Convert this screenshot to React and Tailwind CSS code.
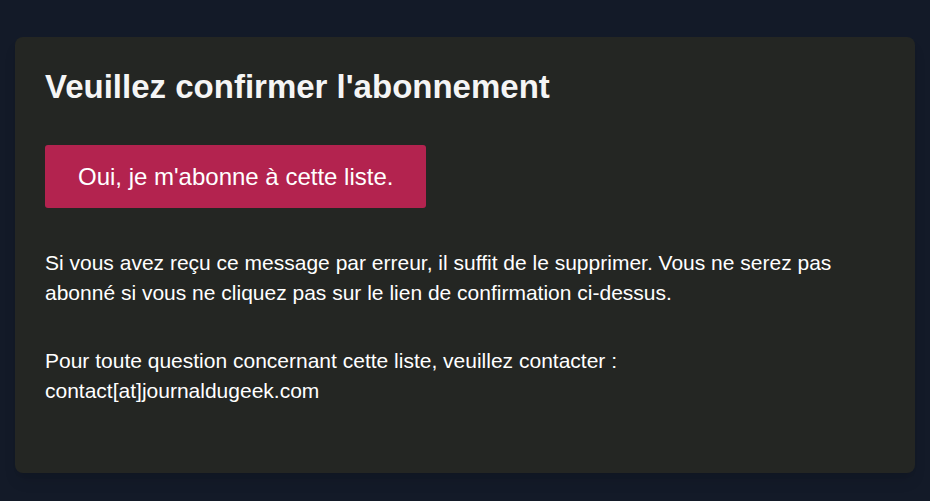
export default function App() {
  return (
    <div className="min-h-[501px] bg-[#131a28] px-[15px] pt-[37px] pb-[28px] font-['Liberation_Sans',Arial,sans-serif]">
      <div className="rounded-lg bg-[#242623] px-[30px] pt-[30px] pb-[67px] text-white shadow-lg">
        <h1 className="text-[33px] font-bold leading-[40px] text-[#f5f5f5]">Veuillez confirmer l'abonnement</h1>
        <button className="mt-[38px] rounded-[3px] bg-[#b3234f] px-[33px] py-[17px] text-[24px] leading-[29px] text-white">
          Oui, je m'abonne à cette liste.
        </button>
        <p className="mt-[40px] text-[21px] leading-[30px]">
          Si vous avez reçu ce message par erreur, il suffit de le supprimer. Vous ne serez pas abonné si vous ne cliquez pas sur le lien de confirmation ci-dessus.
        </p>
        <p className="mt-[38px] text-[21px] leading-[30px]">
          Pour toute question concernant cette liste, veuillez contacter :<br />
          contact[at]journaldugeek.com
        </p>
      </div>
    </div>
  );
}
